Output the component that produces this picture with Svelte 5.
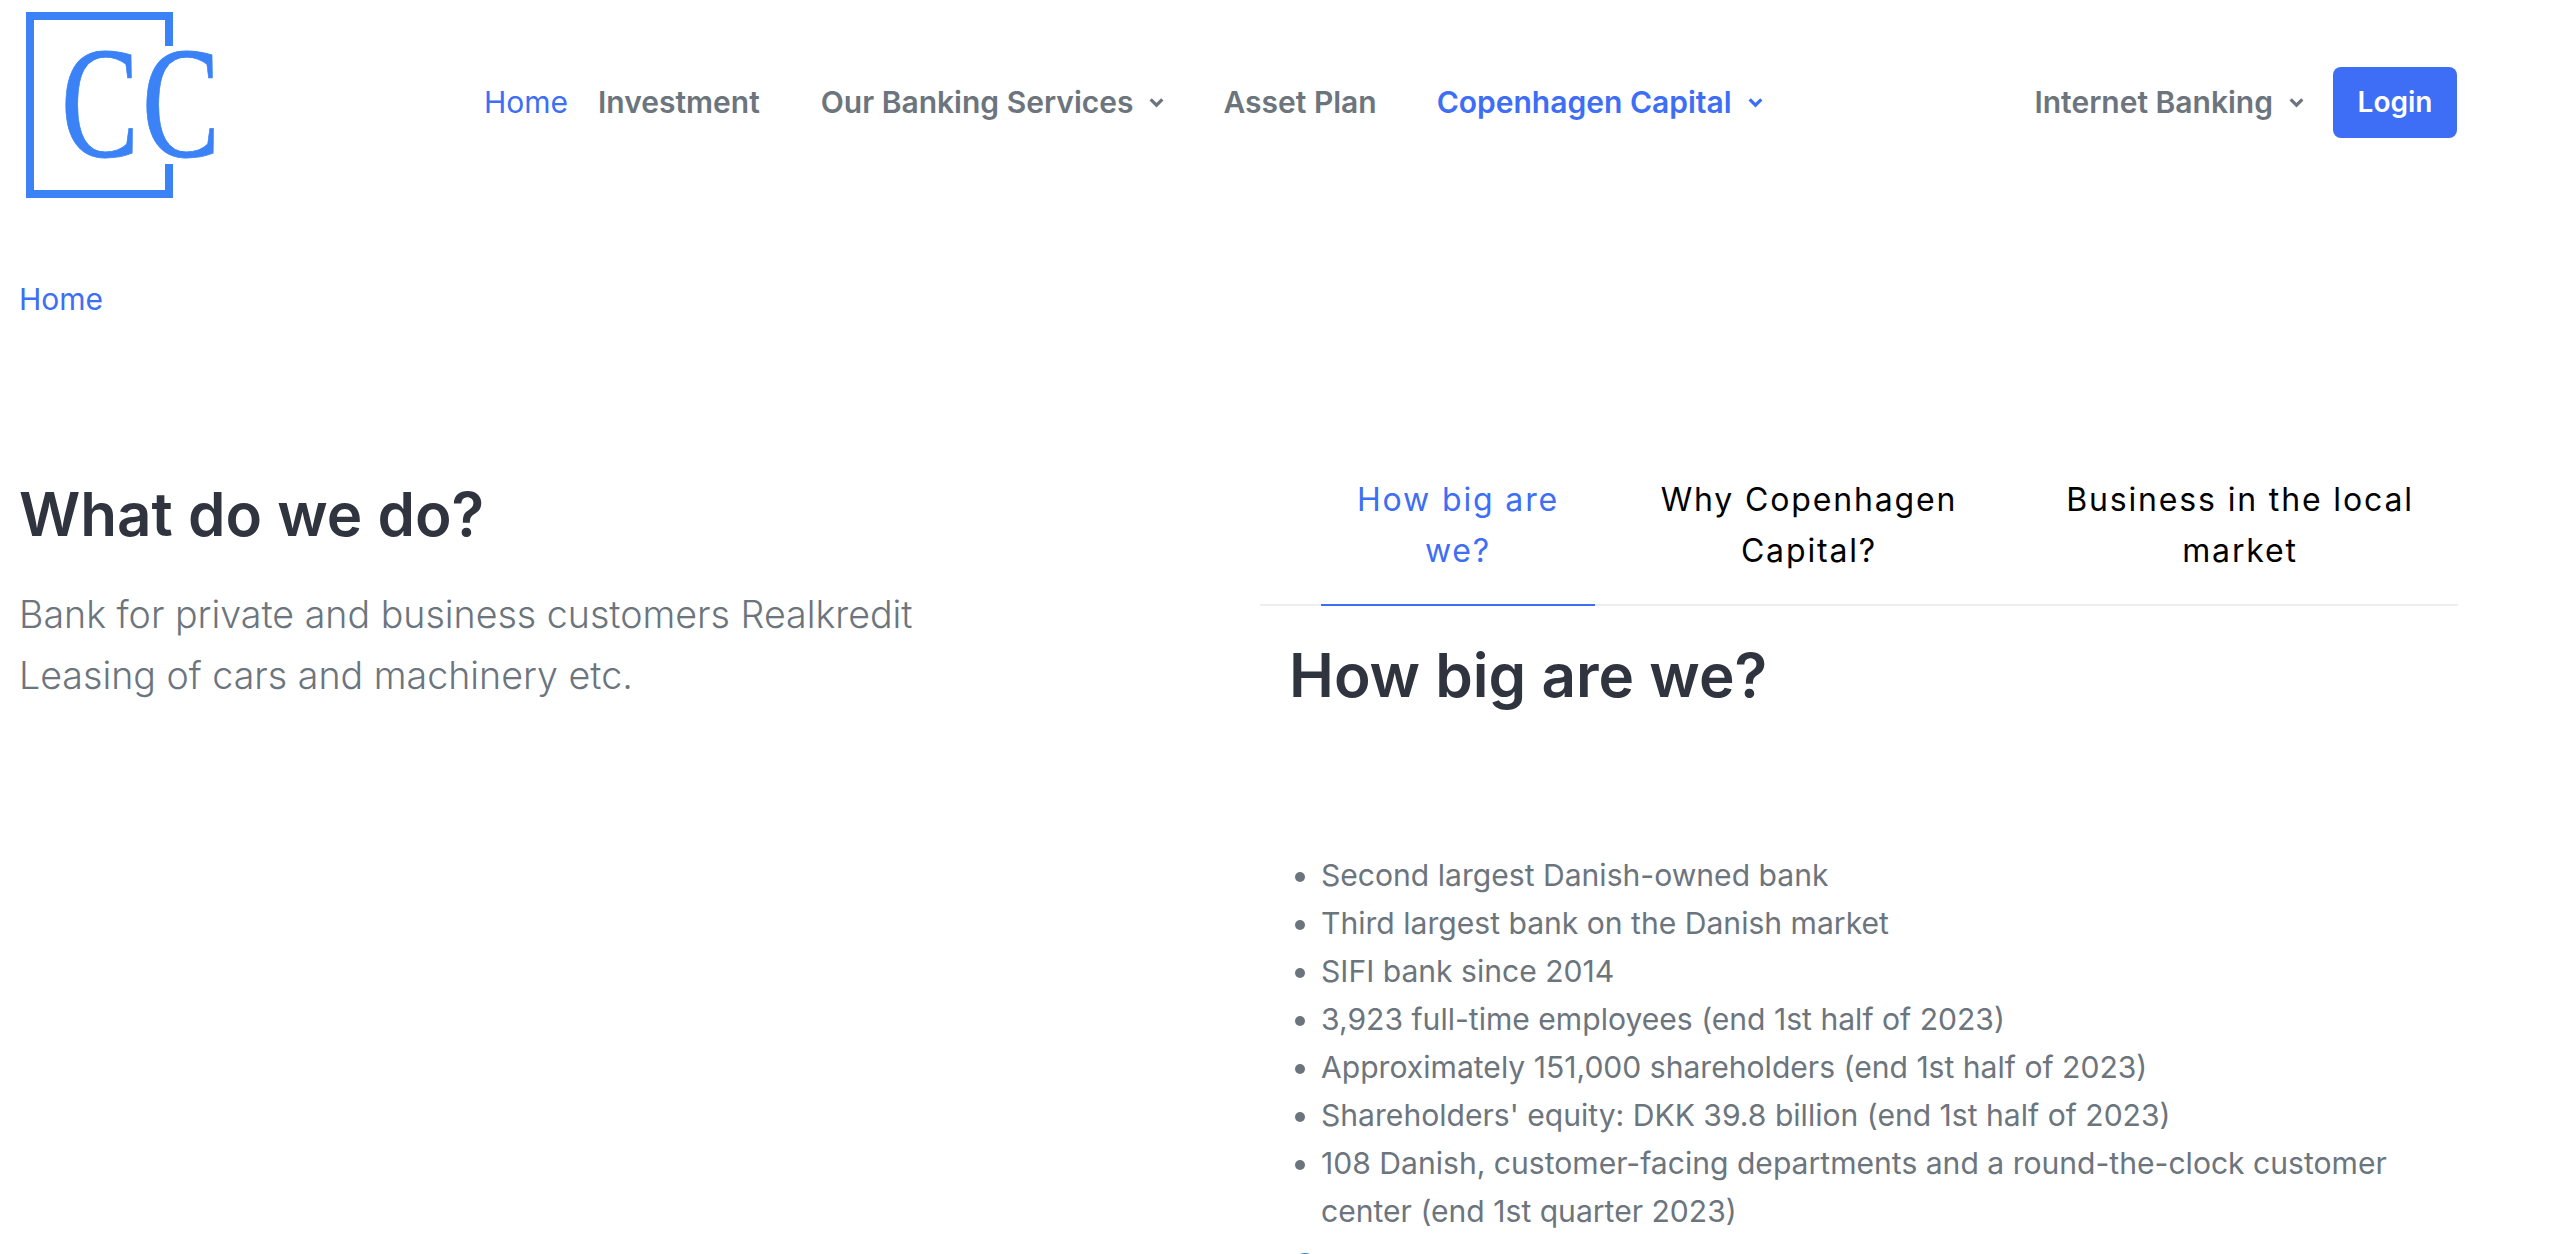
<script lang="ts">
	const facts = [
		'Second largest Danish-owned bank',
		'Third largest bank on the Danish market',
		'SIFI bank since 2014',
		'3,923 full-time employees (end 1st half of 2023)',
		'Approximately 151,000 shareholders (end 1st half of 2023)',
		"Shareholders' equity: DKK 39.8 billion (end 1st half of 2023)",
		'108 Danish, customer-facing departments and a round-the-clock customer center (end 1st quarter 2023)'
	];
</script>

{#snippet chevron()}
	<svg class="chevron" viewBox="0 0 16 16" aria-hidden="true">
		<path d="M2.5 5 8 10.5 13.5 5" />
	</svg>
{/snippet}

<div class="page">
	<header class="header">
		<a class="logo" href="#top" aria-label="Copenhagen Capital">
			<svg viewBox="0 0 232 200" width="232" height="200" aria-hidden="true">
				<path class="frame" d="M169 44V14H30v178h139v-30" />
				<text class="letter" transform="translate(61 154) scale(.74 1)">C</text>
				<text class="letter" transform="translate(142 154) scale(.74 1)">C</text>
			</svg>
		</a>
		<nav class="nav">
			<a class="link active" href="#top">Home</a>
			<a class="link investment" href="#top">Investment</a>
			<a class="link banking" href="#top">Our Banking Services {@render chevron()}</a>
			<a class="link plan" href="#top">Asset Plan</a>
			<a class="link capital" href="#top">Copenhagen Capital {@render chevron()}</a>
		</nav>
		<div class="actions">
			<a class="link" href="#top">Internet Banking {@render chevron()}</a>
			<a class="login" href="#top">Login</a>
		</div>
	</header>

	<div class="crumb"><a href="#top">Home</a></div>

	<main class="columns">
		<section class="intro">
			<h1>What do we do?</h1>
			<p>Bank for private and business customers Realkredit<br />Leasing of cars and machinery etc.</p>
		</section>
		<section class="panel">
			<div class="tabs">
				<button class="tab one selected">How big are we?</button>
				<button class="tab two">Why Copenhagen Capital?</button>
				<button class="tab three">Business in the local market</button>
			</div>
			<div class="body">
				<h2>How big are we?</h2>
				<ul>
					{#each facts as fact}
						<li>{fact}</li>
					{/each}
				</ul>
				<span class="dot"></span>
			</div>
		</section>
	</main>
</div>

<style>
	:global(body) {
		margin: 0;
		background: #fff;
		font-family: Inter, 'Liberation Sans', sans-serif;
		overflow: hidden;
	}

	a {
		text-decoration: none;
	}

	.page {
		height: 1254px;
		overflow: hidden;
	}

	.header {
		display: flex;
		align-items: center;
		height: 204px;
		padding-right: 103px;
	}

	.logo {
		display: block;
		width: 232px;
		height: 200px;
		flex-shrink: 0;
	}

	.frame {
		fill: none;
		stroke: #3b82f6;
		stroke-width: 8;
	}

	.letter {
		font-family: 'Liberation Serif', serif;
		font-size: 158px;
		fill: #3b82f6;
		stroke: #3b82f6;
		stroke-width: 0.8;
	}

	.nav {
		display: flex;
		align-items: center;
		margin-left: 252px;
	}

	.link {
		display: inline-flex;
		align-items: center;
		font-size: 30px;
		font-weight: 600;
		color: #6c757d;
		white-space: nowrap;
	}

	.nav .active {
		color: #3d6ef5;
		font-weight: 400;
	}

	.investment {
		margin-left: 30px;
	}

	.banking {
		margin-left: 61px;
	}

	.plan {
		margin-left: 58px;
	}

	.nav .capital {
		margin-left: 60px;
		color: #3d6ef5;
	}

	.chevron {
		width: 17px;
		height: 17px;
		margin-left: 15px;
		fill: none;
		stroke: currentColor;
		stroke-width: 3;
	}

	.actions {
		display: flex;
		align-items: center;
		gap: 28px;
		margin-left: auto;
	}

	.login {
		display: flex;
		align-items: center;
		justify-content: center;
		width: 124px;
		height: 71px;
		border-radius: 8px;
		background: #3d6ef5;
		color: #fff;
		font-size: 28px;
		font-weight: 600;
	}

	.crumb {
		margin-top: 75px;
		padding-left: 19px;
		font-size: 30px;
		line-height: 40px;
	}

	.crumb a {
		color: #3d6ef5;
	}

	.columns {
		display: grid;
		grid-template-columns: 1241px 1198px;
		margin-top: 139px;
		padding-left: 19px;
	}

	h1 {
		margin: 20px 0 0;
		font-size: 60.1px;
		line-height: 72px;
		font-weight: 600;
		color: #30343f;
	}

	.intro p {
		margin: 35px 0 0;
		font-size: 37.6px;
		line-height: 60.5px;
		font-weight: 300;
		color: #6c757d;
		white-space: nowrap;
	}

	.tabs {
		display: flex;
		height: 146px;
		padding-left: 61px;
		border-bottom: 2px solid #eceef0;
	}

	.tab {
		height: 148px;
		border: 0;
		background: none;
		font: inherit;
		font-size: 32px;
		line-height: 51px;
		letter-spacing: 1.85px;
		color: #000;
		text-align: center;
		padding: 16px 30px 30px;
	}

	.tab.selected {
		color: #3d6ef5;
		border-bottom: 2px solid #3d6ef5;
	}

	.one {
		width: 274px;
	}

	.two {
		width: 428px;
		padding-left: 60px;
		padding-right: 60px;
	}

	.three {
		width: 434px;
	}

	.body {
		padding-left: 29px;
	}

	h2 {
		margin: 34px 0 0;
		font-size: 60.2px;
		line-height: 72px;
		font-weight: 600;
		color: #30343f;
	}

	ul {
		margin: 139px 0 0;
		padding: 0 0 0 32px;
		font-size: 30.1px;
		line-height: 48px;
		color: #6c757d;
	}

	.dot {
		display: block;
		width: 24px;
		height: 24px;
		margin: 18px 0 0 4px;
		border-radius: 50%;
		background: #2f7fc1;
	}
</style>
